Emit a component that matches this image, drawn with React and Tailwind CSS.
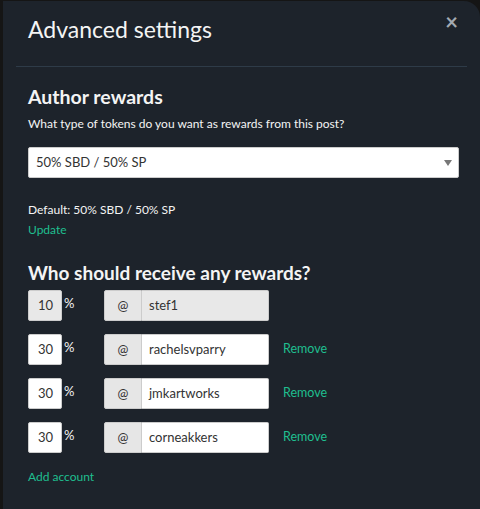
import React from "react";

const font = { fontFamily: '"Lato", "Liberation Sans", sans-serif' };

function Row({ pct, name, disabled, removable }) {
  return (
    <div className="flex items-center h-[31px]">
      <div
        className={`w-[34px] h-[31px] flex items-center pl-[9px] text-[13px] text-[#333] border border-[#ccc] rounded-[2px] ${
          disabled ? "bg-[#e8e8e8]" : "bg-white"
        }`}
      >
        {pct}
      </div>
      <div className="w-[42px] self-start pt-[4px] pl-[2px] text-[13px] text-[#f4f4f4]">%</div>
      <div className="flex h-[31px]">
        <div className="w-[38px] flex items-center justify-center bg-[#e6e6e6] border border-[#ccc] rounded-l-[2px] text-[13px] text-[#333]">
          @
        </div>
        <div
          className={`w-[127px] flex items-center pl-[7px] text-[13px] text-[#333] border border-l-0 border-[#ccc] rounded-r-[2px] ${
            disabled ? "bg-[#e8e8e8]" : "bg-white"
          }`}
        >
          {name}
        </div>
      </div>
      {removable && (
        <div className="ml-[14px] text-[12.5px] text-[#1fbf8f]">Remove</div>
      )}
    </div>
  );
}

export default function App() {
  return (
    <div className="w-[480px] h-[509px] bg-[#151515] overflow-hidden" style={font}>
      <div className="ml-[3px] mt-[1px] h-[520px] bg-[#1d232b] rounded-tr-[16px] relative">
        <div className="absolute right-[22px] top-[10px] text-[#a3aab2] text-[22px] leading-none font-bold">
          ×
        </div>
        <div className="pl-[25px] pt-[13px] h-[65px]">
          <h1 className="text-[23px] leading-[30px] text-[#f4f4f4]">Advanced settings</h1>
        </div>
        <div className="mx-[13px] h-px bg-[#2e3b48]" />
        <div className="pl-[25px] pr-[21px]">
          <h2 className="mt-[17px] text-[19.5px] leading-[26px] font-bold text-[#f4f4f4]">
            Author rewards
          </h2>
          <p className="mt-[5px] text-[12px] leading-[18px] text-[#f4f4f4]">
            What type of tokens do you want as rewards from this post?
          </p>
          <div className="mt-[14px] h-[31px] bg-white border border-[#ccc] rounded-[2px] flex items-center justify-between pl-[7px] pr-[6px]">
            <span className="text-[13px] text-[#333]">50% SBD / 50% SP</span>
            <svg width="8" height="6" viewBox="0 0 8 6">
              <path d="M0 0 L8 0 L4 6 Z" fill="#777" />
            </svg>
          </div>
          <p className="mt-[23px] text-[12px] leading-[18px] text-[#f4f4f4]">
            Default: 50% SBD / 50% SP
          </p>
          <p className="mt-[2px] text-[12px] leading-[18px] text-[#1fbf8f]">Update</p>
          <h2 className="mt-[21px] text-[19px] leading-[26px] font-bold text-[#f4f4f4]">
            Who should receive any rewards?
          </h2>
          <div className="mt-[4px] flex flex-col gap-[13px]">
            <Row pct="10" name="stef1" disabled />
            <Row pct="30" name="rachelsvparry" removable />
            <Row pct="30" name="jmkartworks" removable />
            <Row pct="30" name="corneakkers" removable />
          </div>
          <p className="mt-[15px] text-[12px] leading-[18px] text-[#1fbf8f]">Add account</p>
        </div>
      </div>
    </div>
  );
}
